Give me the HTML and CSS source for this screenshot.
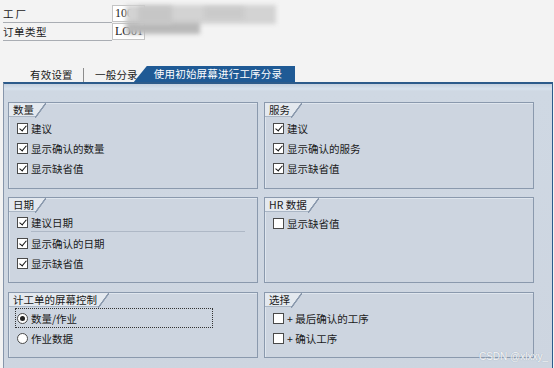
FILE: index.html
```html
<!DOCTYPE html>
<html lang="zh-CN">
<head>
    <meta charset="UTF-8">
    <title>工序分录</title>
    <link rel="stylesheet" href="styles.css">
</head>
<body>

<div class="header">
    <div class="field-row">
        <span class="field-label">工厂</span>
        <span class="field-input">1000</span>
    </div>
    <div class="field-row">
        <span class="field-label">订单类型</span>
        <span class="field-input">LO01</span>
    </div>
    <div class="redacted">
        <div class="blot blot-a"></div>
        <div class="blot blot-b"></div>
        <div class="blot blot-c"></div>
        <div class="blot blot-d"></div>
    </div>
</div>

<div class="tabs">
    <div class="tab">有效设置</div>
    <div class="tab-sep"></div>
    <div class="tab">一般分录</div>
    <div class="tab tab-active">使用初始屏幕进行工序分录</div>
</div>

<div class="panel">
    <div class="groups">
        <div class="group">
            <div class="group-title"><span>数量</span></div>
            <div class="opt"><span class="cb on"></span>建议</div>
            <div class="opt"><span class="cb on"></span>显示确认的数量</div>
            <div class="opt"><span class="cb on"></span>显示缺省值</div>
        </div>
        <div class="group">
            <div class="group-title"><span>服务</span></div>
            <div class="opt"><span class="cb on"></span>建议</div>
            <div class="opt"><span class="cb on"></span>显示确认的服务</div>
            <div class="opt"><span class="cb on"></span>显示缺省值</div>
        </div>
        <div class="group">
            <div class="group-title"><span>日期</span></div>
            <div class="opt opt-sep"><span class="cb on"></span>建议日期</div>
            <div class="opt"><span class="cb on"></span>显示确认的日期</div>
            <div class="opt"><span class="cb on"></span>显示缺省值</div>
        </div>
        <div class="group">
            <div class="group-title"><span>HR 数据</span></div>
            <div class="opt"><span class="cb"></span>显示缺省值</div>
        </div>
        <div class="group">
            <div class="group-title"><span>计工单的屏幕控制</span></div>
            <div class="opt opt-focus"><span class="rb on"></span>数量/作业</div>
            <div class="opt"><span class="rb"></span>作业数据</div>
        </div>
        <div class="group">
            <div class="group-title"><span>选择</span></div>
            <div class="opt"><span class="cb"></span>+ 最后确认的工序</div>
            <div class="opt"><span class="cb"></span>+ 确认工序</div>
        </div>
    </div>
    <div class="watermark">CSDN @xlxxy_</div>
</div>

</body>
</html>
```

FILE: styles.css
```css
body {
    margin: 0;
    background: #f3f3f3;
    font-family: "Noto Sans CJK SC", "Noto Sans", sans-serif;
    font-size: 10.5px;
    color: #1a1a1a;
    overflow: hidden;
}
.header {
    position: relative;
    padding-top: 5px;
    height: 36px;
}
.field-row {
    display: flex;
    height: 18px;
}
.field-label {
    width: 109px;
    margin-left: 3px;
    line-height: 18px;
    border-bottom: 1px solid #a9adb3;
    box-sizing: border-box;
    letter-spacing: 0.5px;
}
.field-row:first-child .field-label {
    letter-spacing: 2px;
}
.field-input {
    width: 33px;
    height: 17px;
    background: #fff;
    border: 1px solid #c4c4c4;
    box-sizing: border-box;
    font-family: "Liberation Serif", serif;
    font-size: 12px;
    line-height: 15px;
    padding-left: 2px;
    overflow: hidden;
    white-space: nowrap;
}
.redacted {
    position: absolute;
    left: 124px;
    top: 2px;
    width: 160px;
    height: 36px;
}
.blot {
    position: absolute;
    filter: blur(2px);
}
.blot-a {
    left: 2px;
    top: 3px;
    width: 150px;
    height: 19px;
    background: #d3d3d3;
}
.blot-b {
    left: 2px;
    top: 20px;
    width: 74px;
    height: 12px;
    background: #b9b9b9;
}
.blot-c {
    left: 14px;
    top: 4px;
    width: 34px;
    height: 18px;
    background: #c6c6c6;
}
.blot-d {
    left: 80px;
    top: 5px;
    width: 40px;
    height: 12px;
    background: #cacaca;
}
.tabs {
    display: flex;
    align-items: flex-end;
    margin-left: 22px;
    margin-top: 25px;
    height: 16px;
}
.tab {
    height: 15px;
    line-height: 15px;
    padding: 0 8px;
    color: #1a1a1a;
    letter-spacing: 0.2px;
}
.tab:first-child {
    width: 43px;
}
.tab-sep {
    width: 1px;
    height: 14px;
    background: #8c8c8c;
    margin: 0 3px 0 2px;
}
.tab-active {
    margin-left: -12px;
    padding: 0 13px 0 20px;
    height: 16px;
    line-height: 16px;
    color: #fff;
    background: #1f5a95;
    clip-path: polygon(13px 0, 100% 0, 100% 100%, 0 100%);
}
.panel {
    position: relative;
    margin-left: 3px;
    width: 550px;
    height: 290px;
    box-sizing: border-box;
    border-top: 2px solid #2c5b8b;
    border-left: 1px solid #8796ab;
    border-right: 1px solid #2c5b8b;
    background: linear-gradient(to bottom, #c4d0de 0, #d7e2ee 5px, #cfd8e3 7px, #cdd5e0 100%);
}
.groups {
    display: grid;
    grid-template-columns: 250px 270px;
    grid-template-rows: 87px 86px 67px;
    column-gap: 6px;
    row-gap: 8px;
    padding: 18px 0 0 4px;
}
.group:nth-child(5), .group:nth-child(6) {
    margin-top: 1px;
}
.group {
    border: 1px solid #8a99ad;
    box-shadow: inset 1px 1px 0 #dfe6ee;
    background: #cdd5e0;
}
.group-title {
    display: flex;
    height: 14px;
    margin-bottom: 1px;
}
.group-title span {
    background: #e4e9ef;
    padding: 0 1px 0 4px;
    line-height: 14px;
    border-bottom: 1px solid #aab6c5;
}
.group-title::after {
    content: "";
    width: 11px;
    height: 15px;
    background: linear-gradient(to bottom right, #e4e9ef calc(50% - 1px), #8a99ad calc(50% - 0.5px), #8a99ad calc(50% + 0.5px), transparent calc(50% + 1px));
}
.opt {
    display: flex;
    align-items: center;
    height: 20px;
    padding-left: 8px;
    gap: 3px;
}
.opt-sep {
    margin-right: 12px;
    height: 19px;
    border-bottom: 1px solid transparent;
    background: linear-gradient(#aeb8c6, #aeb8c6) no-repeat 22px 100% / calc(100% - 22px) 1px;
}
.opt-focus {
    margin-left: 6px;
    padding-left: 2px;
    width: 198px;
    box-sizing: border-box;
    outline: 1px dotted #333;
    outline-offset: -1px;
}
.cb {
    width: 11px;
    height: 11px;
    box-sizing: border-box;
    border: 1px solid #4a4a4a;
    background: #fff;
    position: relative;
}
.cb.on::after {
    content: "";
    position: absolute;
    left: 3px;
    top: 0px;
    width: 3px;
    height: 6px;
    border-right: 1.6px solid #111;
    border-bottom: 1.6px solid #111;
    transform: rotate(40deg);
}
.rb {
    width: 11px;
    height: 11px;
    box-sizing: border-box;
    border: 1px solid #4a4a4a;
    border-radius: 50%;
    background: #fff;
    position: relative;
}
.rb.on::after {
    content: "";
    position: absolute;
    left: 2px;
    top: 2px;
    width: 5px;
    height: 5px;
    border-radius: 50%;
    background: #222;
}
.watermark {
    position: absolute;
    right: 4px;
    top: 267px;
    font-family: "Liberation Sans", sans-serif;
    font-size: 10px;
    color: rgba(255, 255, 255, 0.9);
    text-shadow: 0 0 1px #8f9bab;
}
```
